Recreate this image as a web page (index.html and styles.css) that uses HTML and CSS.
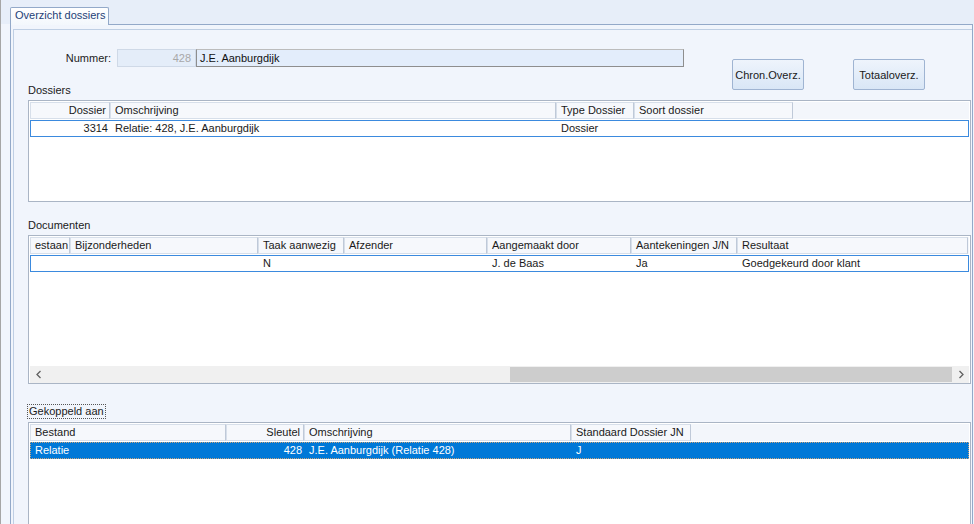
FILE: index.html
```html
<!DOCTYPE html>
<html>
<head>
<meta charset="utf-8">
<link rel="stylesheet" href="styles.css">
</head>
<body>
<div class="screen">
  <div class="tabstrip">
    <div class="tab">Overzicht dossiers</div>
  </div>
  <div class="page">
    <div class="inner">
      <div class="top">
        <div class="nummer-row">
          <span class="lbl">Nummer:</span>
          <div class="field num">428</div>
          <div class="field name">J.E. Aanburgdijk</div>
        </div>
        <div class="buttons">
          <div class="btn">Chron.Overz.</div>
          <div class="btn">Totaaloverz.</div>
        </div>
        <div class="section-label first">Dossiers</div>
      </div>

      <div class="grid g-dos">
        <div class="hdr cols-dos">
          <div class="c r">Dossier</div>
          <div class="c">Omschrijving</div>
          <div class="c">Type Dossier</div>
          <div class="c">Soort dossier</div>
          <div class="fill"></div>
        </div>
        <div class="row focus cols-dos">
          <div class="d r">3314</div>
          <div class="d">Relatie: 428, J.E. Aanburgdijk</div>
          <div class="d">Dossier</div>
          <div class="d"></div>
          <div class="fill"></div>
        </div>
      </div>

      <div class="section-label">Documenten</div>
      <div class="grid g-doc">
        <div class="hdr cols-doc">
          <div class="c">estaan</div>
          <div class="c">Bijzonderheden</div>
          <div class="c">Taak aanwezig</div>
          <div class="c">Afzender</div>
          <div class="c">Aangemaakt door</div>
          <div class="c">Aantekeningen J/N</div>
          <div class="c">Resultaat</div>
          <div class="fill"></div>
        </div>
        <div class="row focus cols-doc">
          <div class="d"></div>
          <div class="d"></div>
          <div class="d">N</div>
          <div class="d"></div>
          <div class="d">J. de Baas</div>
          <div class="d">Ja</div>
          <div class="d">Goedgekeurd door klant</div>
          <div class="fill"></div>
        </div>
        <div class="spacer"></div>
        <div class="hscroll">
          <div class="arrow"><svg width="8" height="9" viewBox="0 0 8 9"><path d="M5.5 1 L2 4.5 L5.5 8" fill="none" stroke="#606060" stroke-width="1.3"/></svg></div>
          <div class="track"><div class="thumb"></div></div>
          <div class="arrow"><svg width="8" height="9" viewBox="0 0 8 9"><path d="M2.5 1 L6 4.5 L2.5 8" fill="none" stroke="#606060" stroke-width="1.3"/></svg></div>
        </div>
      </div>

      <div class="focus-label">Gekoppeld aan</div>
      <div class="grid g-gek">
        <div class="hdr cols-gek">
          <div class="c">Bestand</div>
          <div class="c r">Sleutel</div>
          <div class="c">Omschrijving</div>
          <div class="c">Standaard Dossier JN</div>
          <div class="fill"></div>
        </div>
        <div class="row selected cols-gek">
          <div class="d">Relatie</div>
          <div class="d r">428</div>
          <div class="d">J.E. Aanburgdijk (Relatie 428)</div>
          <div class="d">J</div>
          <div class="fill"></div>
        </div>
      </div>
    </div>
  </div>
</div>
</body>
</html>
```

FILE: styles.css
```css
* { box-sizing: border-box; }
html, body { margin: 0; padding: 0; }
body {
  width: 974px;
  height: 524px;
  overflow: hidden;
  background: #f1f5fc;
  font-family: "Liberation Sans", Arial, sans-serif;
  font-size: 11px;
  color: #1a1a1a;
}
.screen {
  height: 524px;
  border-left: 1px solid #a6a6a6;
  padding-left: 9px;
}
.tabstrip {
  height: 24px;
  margin-left: -9px;
  padding: 7px 0 0 9px;
  background: #e7eef9;
  display: flex;
}
.tab {
  width: 99px;
  height: 18px;
  border: 1px solid #93a9c9;
  border-bottom: none;
  border-radius: 2px 2px 0 0;
  background: linear-gradient(#ffffff, #f3f7fc);
  color: #1f3f77;
  padding-left: 4px;
  line-height: 15px;
  position: relative;
  z-index: 1;
}
.page {
  width: 963px;
  height: 500px;
  border: 1px solid #93a9c9;
  border-bottom: none;
  padding: 4px 0 0 2px;
  background: #f1f5fc;
}
.inner {
  height: 496px;
  border-top: 1px solid #bfcfe4;
  border-left: 1px solid #bfcfe4;
  padding: 19px 0 0 14px;
  display: flex;
  flex-direction: column;
  align-items: flex-start;
}
.top {
  display: grid;
  grid-template-columns: 656px auto;
  column-gap: 48px;
}
.nummer-row {
  grid-column: 1;
  grid-row: 1;
  display: flex;
  height: 18px;
}
.lbl {
  width: 89px;
  text-align: right;
  padding-right: 6px;
  line-height: 18px;
  color: #222;
}
.field {
  height: 18px;
  line-height: 16px;
  white-space: nowrap;
}
.field.num {
  width: 79px;
  background: #e4edf9;
  border: 1px solid #cfd9e7;
  color: #a8a8a8;
  text-align: right;
  padding-right: 4px;
}
.field.name {
  width: 488px;
  background: #e3edfb;
  border: 1px solid #8e8e8e;
  border-top-color: #bcbcbc;
  padding-left: 3px;
  color: #111;
}
.buttons {
  grid-column: 2;
  grid-row: 1 / span 2;
  display: flex;
  gap: 49px;
  padding-top: 10px;
}
.btn {
  width: 72px;
  height: 31px;
  border: 1px solid #9fb4d2;
  border-radius: 2px;
  background: linear-gradient(#eef4fc, #d9e6f6);
  display: flex;
  align-items: center;
  justify-content: center;
  color: #1a1a1a;
}
.section-label {
  line-height: 13px;
  height: 13px;
  margin-top: 17px;
  margin-bottom: 3px;
}
.section-label.first {
  grid-column: 1;
  grid-row: 2;
  margin-top: 17px;
  margin-bottom: 3px;
}
.focus-label {
  margin-top: 20px;
  margin-bottom: 3px;
  margin-left: -1px;
  height: 15px;
  line-height: 13px;
  padding: 0 1px;
  border: 1px dotted #555;
}
.grid {
  width: 943px;
  background: #fff;
  border: 1px solid #aab5c5;
  padding: 1px;
  display: flex;
  flex-direction: column;
  flex-shrink: 0;
}
.g-dos { height: 102px; }
.g-doc { height: 149px; padding-bottom: 0; }
.g-gek { height: 120px; }
.hdr, .row {
  display: grid;
  height: 17px;
  flex-shrink: 0;
}
.hdr { background: #f3f6fb; }
.row { margin-top: 1px; }
.cols-dos { grid-template-columns: 80px 446px 78px 159px 1fr; }
.cols-doc { grid-template-columns: 40px 188px 86px 143px 144px 106px 231px 1fr; }
.cols-gek { grid-template-columns: 196px 78px 267px 120px 1fr; }
.c {
  border: 1px solid #d7dfea;
  border-right-color: #bfc9d8;
  background: #f6f8fc;
  padding: 0 3px 0 4px;
  line-height: 15px;
  white-space: nowrap;
  overflow: hidden;
}
.d {
  padding: 0 3px 0 4px;
  line-height: 15px;
  white-space: nowrap;
  overflow: hidden;
}
.r { text-align: right; }
.row { border: 1px solid transparent; }
.row.focus { border-color: #3b8ade; }
.row.selected {
  background: #0078d7;
  color: #fff;
  border: 1px dotted #c9a47e;
}
.spacer { flex: 1; }
.hscroll {
  height: 17px;
  display: flex;
  background: #f0f0f0;
  flex-shrink: 0;
}
.arrow {
  width: 17px;
  display: flex;
  align-items: center;
  justify-content: center;
}
.track {
  flex: 1;
  display: flex;
  padding: 1px 0;
}
.thumb {
  margin-left: 463px;
  flex: 1;
  background: #cdcdcd;
}
```
